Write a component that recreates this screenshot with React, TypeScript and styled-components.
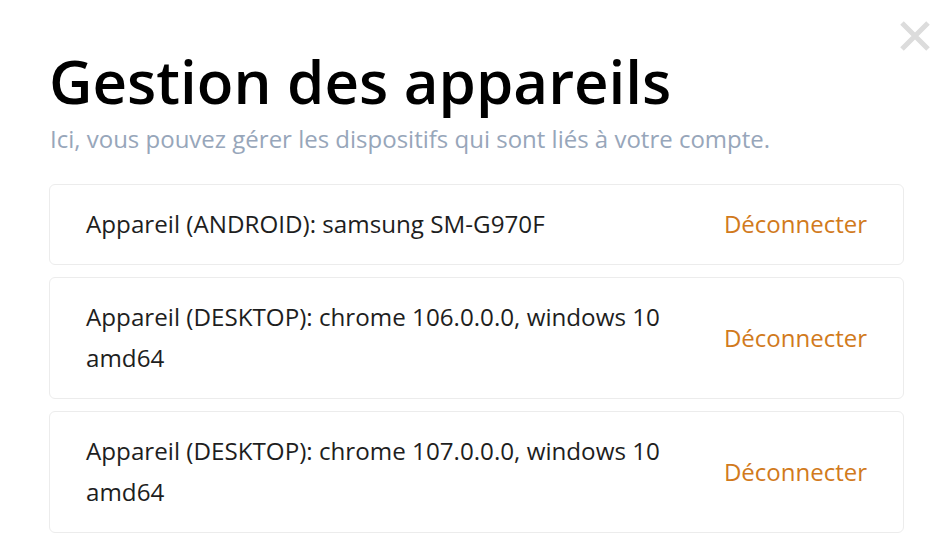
import { createGlobalStyle } from "styled-components"
import styled from "styled-components"

const GlobalStyle = createGlobalStyle`
  html, body {
    margin: 0;
    padding: 0;
    background: #ffffff;
  }
  body {
    font-family: "Open Sans", "Noto Sans", sans-serif;
    color: #1a1a1a;
  }
`

interface Device {
  id: string
  label: string
}

const devices: Device[] = [
  { id: "a", label: "Appareil (ANDROID): samsung SM-G970F" },
  { id: "b", label: "Appareil (DESKTOP): chrome 106.0.0.0, windows 10 amd64" },
  { id: "c", label: "Appareil (DESKTOP): chrome 107.0.0.0, windows 10 amd64" },
]

const Modal = styled.div`
  position: relative;
  width: 951px;
  height: 557px;
  box-sizing: border-box;
  padding: 40px 47px 0 49px;
  background: #fff;
  overflow: hidden;
`

const CloseButton = styled.button`
  position: absolute;
  top: 21px;
  right: 21px;
  width: 30px;
  height: 30px;
  padding: 0;
  border: none;
  background: transparent;
  cursor: pointer;
  display: flex;
  align-items: center;
  justify-content: center;
`

const Title = styled.h1`
  margin: 0;
  font-size: 60px;
  font-weight: 600;
  line-height: 82px;
  color: #000;
`

const Subtitle = styled.p`
  margin: 0 0 28px 1px;
  font-size: 24px;
  line-height: 34px;
  color: #97a6ba;
`

const DeviceList = styled.div`
  display: flex;
  flex-direction: column;
  gap: 12px;
`

const Card = styled.div`
  display: flex;
  align-items: center;
  justify-content: space-between;
  gap: 40px;
  box-sizing: border-box;
  padding: 18px 36px 20px;
  border: 1px solid #ececec;
  border-radius: 6px;
`

const DeviceName = styled.div`
  max-width: 590px;
  font-size: 24.2px;
  line-height: 41px;
  color: #1e1e1e;
`

const Disconnect = styled.button`
  flex-shrink: 0;
  padding: 0;
  border: none;
  background: transparent;
  font-family: inherit;
  font-size: 24px;
  color: #d17a1c;
  cursor: pointer;
`

function CloseIcon() {
  return (
    <svg width="30" height="30" viewBox="0 0 30 30">
      <path d="M2 2 L28 28 M28 2 L2 28" stroke="#dcdcdc" strokeWidth="5" strokeLinecap="butt" />
    </svg>
  )
}

export default function App() {
  return (
    <>
      <GlobalStyle />
      <Modal>
        <CloseButton aria-label="Fermer"><CloseIcon /></CloseButton>
        <Title>Gestion des appareils</Title>
        <Subtitle>Ici, vous pouvez gérer les dispositifs qui sont liés à votre compte.</Subtitle>
        <DeviceList>
          {devices.map(d => (
            <Card key={d.id}>
              <DeviceName>{d.label}</DeviceName>
              <Disconnect>Déconnecter</Disconnect>
            </Card>
          ))}
        </DeviceList>
      </Modal>
    </>
  )
}
